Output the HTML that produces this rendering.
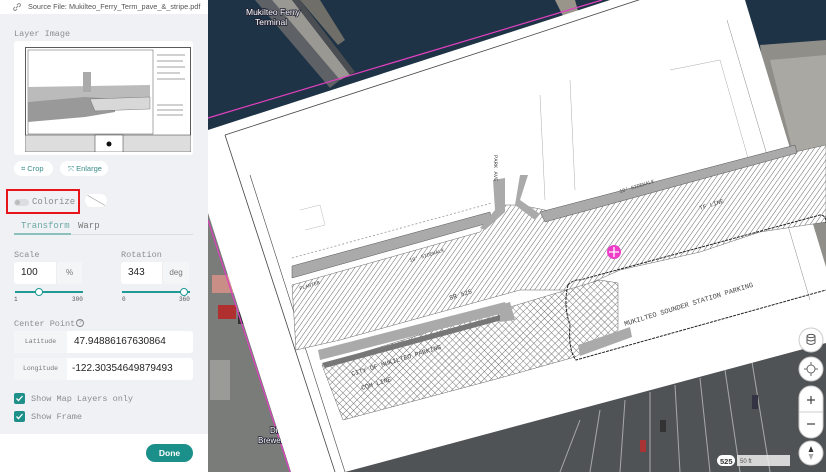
<!DOCTYPE html>
<html><head><meta charset="utf-8"><style>
*{margin:0;padding:0;box-sizing:border-box}
body{width:826px;height:472px;overflow:hidden;position:relative;font-family:"Liberation Sans",sans-serif;background:#1d3042}
.side{position:absolute;left:0;top:0;width:208px;height:472px;background:#f0f1f4}
.abs{position:absolute}
.mono{font-family:"Liberation Mono",monospace;color:#8a8d92}
.lbl{font-size:8.5px}
.inp{background:#fff;border-radius:3px}
.unit{background:#f4f5f7;font-size:8px;color:#777;text-align:center;line-height:22px;border-left:1px solid #eee}
.cb{width:11px;height:11px;background:#1f8f8a;border-radius:2px}
</style></head><body>
<svg class="abs" style="left:0;top:0" width="826" height="472" viewBox="0 0 826 472">
<defs>
<pattern id="h" width="4" height="4" patternUnits="userSpaceOnUse" patternTransform="rotate(35)"><rect width="4" height="4" fill="#fff"/><line x1="0" y1="0" x2="0" y2="4" stroke="#666" stroke-width="1"/></pattern>
<pattern id="x" width="5" height="5" patternUnits="userSpaceOnUse" patternTransform="rotate(45)"><rect width="5" height="5" fill="#fff"/><line x1="0" y1="0" x2="0" y2="5" stroke="#666" stroke-width=".9"/><line x1="0" y1="0" x2="5" y2="0" stroke="#666" stroke-width=".9"/></pattern>
</defs>
<rect x="208" y="0" width="618" height="472" fill="#1e3345"/>
<!-- pier -->
<polygon points="255,0 272,0 340,80 330,88" fill="#5e6166"/>
<polygon points="272,0 292,0 350,75 340,80" fill="#9a9893"/>
<polygon points="292,0 300,0 355,72 350,75" fill="#4a4d52"/>
<polygon points="300,0 320,0 345,40 338,45" fill="#6f6e69"/>
<polygon points="555,0 575,0 580,18 565,20" fill="#9a958a"/>
<!-- right buildings -->
<polygon points="760,45 826,40 826,300 790,300" fill="#8f8e88"/>
<polygon points="770,60 826,55 826,150 795,160" fill="#a9a8a2"/>
<rect x="790" y="330" width="36" height="60" fill="#2a3a48"/>
<rect x="800" y="385" width="26" height="87" fill="#b8b8b4"/>
<!-- parking -->
<polygon points="330,472 826,320 826,472" fill="#505356"/>
<g stroke="#ccc" stroke-width="1" opacity=".7">
<line x1="560" y1="472" x2="580" y2="420"/><line x1="590" y1="472" x2="600" y2="410"/><line x1="620" y1="472" x2="625" y2="400"/><line x1="650" y1="472" x2="650" y2="392"/><line x1="680" y1="472" x2="675" y2="385"/><line x1="710" y1="472" x2="700" y2="378"/><line x1="740" y1="472" x2="725" y2="370"/><line x1="770" y1="472" x2="752" y2="362"/>
</g>
<rect x="640" y="440" width="6" height="12" fill="#a33"/><rect x="660" y="420" width="6" height="12" fill="#333"/><rect x="752" y="395" width="6" height="14" fill="#334"/>
<!-- left land -->
<polygon points="208,213 208,472 291,472" fill="#7a7c79"/>
<rect x="212" y="275" width="25" height="18" fill="#c98f86"/>
<rect x="218" y="305" width="18" height="14" fill="#b03030"/>
<rect x="238" y="312" width="14" height="12" fill="#333"/>
<rect x="210" y="360" width="20" height="40" fill="#9a9a96"/>
<line x1="208" y1="220" x2="290" y2="472" stroke="#e040c0" stroke-width="1.2"/>
<line x1="208" y1="118" x2="602" y2="0" stroke="#e040c0" stroke-width="1.2"/>
<g font-family="Liberation Sans" font-size="8.5" fill="#fff" stroke="#223" stroke-width="1.6" paint-order="stroke">
<text x="246" y="15">Mukilteo Ferry</text>
<text x="255" y="25">Terminal</text>
<text x="270" y="433" font-size="8">Diam</text>
<text x="258" y="443" font-size="8">Brewery</text>
</g>
<!-- sheet -->
<polygon points="208,130 610,0 745,0 826,267 826,343 345,472 291,472 208,213" fill="#fff"/>
<polyline points="225,135 508,43 760,-40" fill="none" stroke="#444" stroke-width=".8"/>
<line x1="225" y1="135" x2="335" y2="472" stroke="#444" stroke-width=".8"/>
<line x1="250" y1="175" x2="345" y2="472" stroke="#444" stroke-width=".6"/>
<line x1="727" y1="20" x2="810" y2="300" stroke="#888" stroke-width=".5"/>
<line x1="540" y1="95" x2="545" y2="200" stroke="#aaa" stroke-width=".5"/>
<line x1="570" y1="80" x2="575" y2="190" stroke="#aaa" stroke-width=".5"/>
<polyline points="670,70 720,60 760,200" fill="none" stroke="#aaa" stroke-width=".5"/>
<polyline points="300,210 320,205 325,225 305,230z" fill="none" stroke="#bbb" stroke-width=".5"/>
<!-- hatched road -->
<polygon points="292,285 480,232 495,212 505,205 520,205 545,210 560,215 795,152 826,145 826,222 760,232 700,252 620,270 575,290 520,290 430,315 340,340 296,350" fill="url(#h)" stroke="#666" stroke-width=".5"/>
<polygon points="322,365 500,310 560,292 600,280 618,283 618,330 575,357 500,378 343,420" fill="url(#x)" stroke="#666" stroke-width=".5"/>
<!-- gray strips -->
<polygon points="292,266 490,212 492,222 292,278" fill="#aaa" stroke="#555" stroke-width=".5"/>
<polygon points="493,180 505,178 505,212 485,230 480,228 495,210" fill="#aaa"/>
<polygon points="520,175 528,175 520,200 540,214 535,220 515,205" fill="#aaa"/>
<polygon points="540,212 795,145 797,153 545,222" fill="#aaa" stroke="#555" stroke-width=".5"/>
<polygon points="318,350 505,302 508,312 320,360" fill="#aaa"/>
<polygon points="322,363 500,315 502,320 325,368" fill="#777"/>
<polygon points="500,305 510,302 515,320 500,322" fill="#aaa"/>
<polygon points="578,345 630,327 632,337 580,356" fill="#aaa"/>
<path d="M568,285 q6,-6 12,-5 l 240,-65 q6,0 6,8" fill="none" stroke="#222" stroke-width="1" stroke-dasharray="3,1"/>
<path d="M568,285 q-5,20 2,40 q-2,25 6,35 l 250,-70" fill="none" stroke="#222" stroke-width="1" stroke-dasharray="3,1"/>
<path d="M292,258 l200,-55" fill="none" stroke="#999" stroke-width=".8" stroke-dasharray="2,2"/>
<g font-family="Liberation Mono" fill="#444">
<text x="0" y="0" font-size="6.5" transform="translate(450,300) rotate(-17)">SR 525</text>
<text x="0" y="0" font-size="7" transform="translate(625,326) rotate(-17)">MUKILTEO SOUNDER STATION PARKING</text>
<text x="0" y="0" font-size="6.5" transform="translate(352,376) rotate(-17)">CITY OF MUKILTEO PARKING</text>
<text x="0" y="0" font-size="6.5" transform="translate(362,390) rotate(-17)">COM LINE</text>
<text x="0" y="0" font-size="6" transform="translate(700,210) rotate(-17)">TF LINE</text>
<text x="0" y="0" font-size="5" transform="translate(410,262) rotate(-17)">10' SIDEWALK</text>
<text x="0" y="0" font-size="5" transform="translate(620,193) rotate(-17)">10' SIDEWALK</text>
<text x="0" y="0" font-size="5" transform="translate(300,290) rotate(-17)">PLANTER</text>
<text x="0" y="0" font-size="5.5" transform="translate(494,155) rotate(90)">PARK AVE</text>
</g>
<circle cx="614" cy="252" r="7" fill="#ee3ec8"/>
<path d="M614,247 v10 M609,252 h10" stroke="#fff" stroke-width="1.3"/>
<!-- controls -->
<circle cx="811" cy="340" r="12" fill="#fff" stroke="#ccc"/>
<ellipse cx="811" cy="336" rx="4" ry="1.6" fill="none" stroke="#555"/><path d="M807,336 v7 q4,3 8,0 v-7 M807,339.5 q4,3 8,0" fill="none" stroke="#555"/>
<circle cx="811" cy="369" r="12" fill="#fff" stroke="#ccc"/>
<circle cx="811" cy="369" r="4" fill="none" stroke="#666"/><path d="M811,362 v3 M811,373 v3 M804,369 h3 M815,369 h3" stroke="#666"/>
<rect x="799" y="386" width="24" height="52" rx="12" fill="#fff" stroke="#ccc"/>
<line x1="799" y1="412" x2="823" y2="412" stroke="#ccc"/>
<path d="M811,396 v8 M807,400 h8 M807,424 h8" stroke="#444" stroke-width="1.2"/>
<circle cx="811" cy="453" r="12" fill="#fff" stroke="#ccc"/>
<path d="M811,446 l2.5,6 h-5z" fill="#333"/><path d="M811,460 l2.5,-6 h-5z" fill="#aaa"/>
<rect x="717" y="455" width="18" height="11" rx="5.5" fill="#fff"/>
<text x="720" y="464" font-size="7.5" font-weight="bold" fill="#333" font-family="Liberation Sans">525</text>
<rect x="737" y="455" width="53" height="11" fill="#eee" opacity=".85"/>
<text x="740" y="463" font-size="6" fill="#555" font-family="Liberation Sans">50 ft</text>
</svg>

<div class="side">
 <div class="abs" style="left:0;top:0;width:208px;height:14px;background:#fff"></div>
 <svg class="abs" style="left:13px;top:3px" width="8" height="8" viewBox="0 0 8 8"><path d="M3,5 L5,3 M2,4 L1,5 a1.4,1.4 0 0 0 2,2 L4,6 M4,2 L5,1 a1.4,1.4 0 0 1 2,2 L6,4" stroke="#888" fill="none" stroke-width=".9"/></svg>
 <div class="abs" style="left:28px;top:2px;font-size:7.3px;color:#555;white-space:nowrap">Source File: Mukilteo_Ferry_Term_pave_&amp;_stripe.pdf</div>
 <div class="abs mono lbl" style="left:14px;top:29px">Layer Image</div>
 <div class="abs" style="left:14px;top:41px;width:179px;height:114px;background:#fff;border-radius:3px"></div>
 <svg class="abs" style="left:25px;top:47px" width="166" height="105" viewBox="0 0 166 105">
  <rect x="0.5" y="0.5" width="165" height="104" fill="#fff" stroke="#333" stroke-width=".8"/>
  <rect x="3" y="3" width="125" height="84" fill="none" stroke="#555" stroke-width=".5"/>
  <polygon points="3,40 125,38 125,50 3,55" fill="#bbb"/>
  <polygon points="3,55 60,50 90,52 90,65 60,70 3,75" fill="#999"/>
  <polygon points="65,52 125,50 125,62 70,64" fill="#d8d8d8" stroke="#666" stroke-width=".4"/>
  <rect x="58" y="25" width="8" height="20" fill="#aaa"/>
  <rect x="0" y="88" width="166" height="17" fill="#ddd" stroke="#333" stroke-width=".5"/>
  <rect x="70" y="88" width="28" height="17" fill="#fff" stroke="#333" stroke-width=".5"/>
  <circle cx="84" cy="97" r="2.5" fill="#111"/>
  <g stroke="#444" stroke-width=".6"><line x1="132" y1="8" x2="160" y2="8"/><line x1="132" y1="14" x2="158" y2="14"/><line x1="132" y1="20" x2="160" y2="20"/><line x1="132" y1="26" x2="155" y2="26"/><line x1="132" y1="32" x2="160" y2="32"/><line x1="132" y1="58" x2="158" y2="58"/><line x1="132" y1="63" x2="158" y2="63"/><line x1="132" y1="68" x2="158" y2="68"/></g>
 </svg>
 <div class="abs" style="left:14px;top:161px;width:39px;height:15px;background:#fff;border-radius:8px;font-size:7.5px;color:#3a8c8a;line-height:15px;padding-left:7px">⌗ Crop</div>
 <div class="abs" style="left:60px;top:161px;width:48px;height:15px;background:#fff;border-radius:8px;font-size:7.5px;color:#3a8c8a;line-height:15px;padding-left:8px">⤧ Enlarge</div>
 <div class="abs" style="left:6px;top:189px;width:74px;height:25px;border:2px solid #e8141b"></div>
 <div class="abs" style="left:14px;top:199px;width:15px;height:7px;border-radius:4px;background:#dcdde0"></div>
 <div class="abs" style="left:15px;top:200px;width:5px;height:5px;border-radius:3px;background:#bbb"></div>
 <div class="abs mono" style="left:32px;top:197px;font-size:9px">Colorize</div>
 <div class="abs" style="left:85px;top:194px;width:22px;height:13px;border-radius:7px;background:#fff;overflow:hidden"><svg width="22" height="13"><line x1="2" y1="1" x2="21" y2="12" stroke="#999" stroke-width=".6"/></svg></div>
 <div class="abs mono" style="left:21px;top:221px;font-size:9px;color:#6aa9a6">Transform</div>
 <div class="abs mono" style="left:78px;top:221px;font-size:9px;color:#777">Warp</div>
 <div class="abs" style="left:14px;top:234px;width:179px;height:1px;background:#dcdde0"></div>
 <div class="abs" style="left:14px;top:233px;width:57px;height:2px;background:#8cc0bd"></div>
 <div class="abs mono lbl" style="left:14px;top:250px">Scale</div>
 <div class="abs mono lbl" style="left:121px;top:250px">Rotation</div>
 <div class="abs inp" style="left:14px;top:262px;width:68px;height:22px"></div>
 <div class="abs unit" style="left:56px;top:262px;width:26px;height:22px">%</div>
 <div class="abs" style="left:21px;top:267px;font-size:10px;color:#222">100</div>
 <div class="abs inp" style="left:121px;top:262px;width:68px;height:22px"></div>
 <div class="abs unit" style="left:162px;top:262px;width:27px;height:22px">deg</div>
 <div class="abs" style="left:128px;top:267px;font-size:10px;color:#222">343</div>
 <div class="abs" style="left:15px;top:291px;width:68px;height:2px;background:#1f9a94"></div>
 <div class="abs" style="left:35px;top:288px;width:8px;height:8px;border-radius:50%;background:#fff;border:1px solid #1f9a94"></div>
 <div class="abs" style="left:122px;top:291px;width:68px;height:2px;background:#1f9a94"></div>
 <div class="abs" style="left:180px;top:288px;width:8px;height:8px;border-radius:50%;background:#fff;border:1px solid #1f9a94"></div>
 <div class="abs mono" style="left:14px;top:296px;font-size:6px;color:#555">1</div>
 <div class="abs mono" style="left:72px;top:296px;font-size:6px;color:#555">300</div>
 <div class="abs mono" style="left:122px;top:296px;font-size:6px;color:#555">0</div>
 <div class="abs mono" style="left:179px;top:296px;font-size:6px;color:#555">360</div>
 <div class="abs mono lbl" style="left:14px;top:319px">Center Point</div>
 <div class="abs" style="left:76px;top:319px;width:8px;height:8px;border-radius:50%;border:1px solid #888;font-size:6px;color:#888;text-align:center;line-height:7px">?</div>
 <div class="abs" style="left:14px;top:331px;width:179px;height:22px;background:#fff;border-radius:3px"></div>
 <div class="abs mono" style="left:14px;top:331px;width:53px;height:22px;background:#f4f5f7;font-size:6.5px;line-height:22px;text-align:center;color:#777">Latitude</div>
 <div class="abs" style="left:74px;top:336px;font-size:10px;color:#222">47.94886167630864</div>
 <div class="abs" style="left:14px;top:358px;width:179px;height:22px;background:#fff;border-radius:3px"></div>
 <div class="abs mono" style="left:14px;top:358px;width:53px;height:22px;background:#f4f5f7;font-size:6.5px;line-height:22px;text-align:center;color:#777">Longitude</div>
 <div class="abs" style="left:72px;top:363px;font-size:10px;color:#222">-122.30354649879493</div>
 <div class="abs cb" style="left:14px;top:393px"></div>
 <svg class="abs" style="left:14px;top:393px" width="11" height="11"><path d="M2.5,5.5 l2,2 l4,-4.5" stroke="#fff" fill="none" stroke-width="1.3"/></svg>
 <div class="abs mono" style="left:31px;top:394px;font-size:8.5px">Show Map Layers only</div>
 <div class="abs cb" style="left:14px;top:411px"></div>
 <svg class="abs" style="left:14px;top:411px" width="11" height="11"><path d="M2.5,5.5 l2,2 l4,-4.5" stroke="#fff" fill="none" stroke-width="1.3"/></svg>
 <div class="abs mono" style="left:31px;top:412px;font-size:8.5px">Show Frame</div>
 <div class="abs" style="left:0;top:434px;width:208px;height:38px;background:#fff"></div>
 <div class="abs" style="left:146px;top:444px;width:47px;height:18px;border-radius:9px;background:#1b8f89;color:#fff;font-size:8.5px;font-weight:bold;text-align:center;line-height:18px">Done</div>
</div>
</body></html>
